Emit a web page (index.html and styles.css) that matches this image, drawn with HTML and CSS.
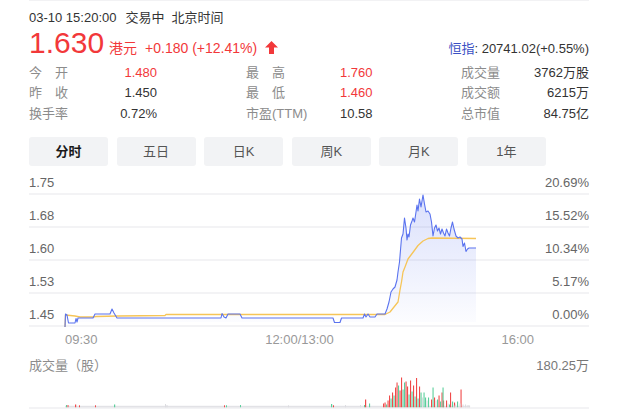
FILE: index.html
```html
<!DOCTYPE html>
<html lang="zh">
<head>
<meta charset="utf-8">
<title>Quote</title>
<link rel="stylesheet" href="styles.css">
</head>
<body>
<div class="page">
  <div class="header">03-10 15:20:00<span class="status">交易中</span><span class="tz">北京时间</span></div>

  <div class="price-row">
    <span class="price">1.630</span>
    <span class="currency">港元</span>
    <span class="change">+0.180 (+12.41%)</span>
    <svg class="arrow" width="13" height="13" viewBox="0 0 13 13"><path d="M6.5 0 L13 6.5 L9 6.5 L9 13 L4 13 L4 6.5 L0 6.5 Z" fill="#f2383a"/></svg>
    <span class="index"><span class="index-name">恒指</span>: 20741.02(+0.55%)</span>
  </div>

  <div class="stats">
    <div class="stat-group g1">
      <span class="lbl">今 开</span><span class="val up">1.480</span>
      <span class="lbl">昨 收</span><span class="val">1.450</span>
      <span class="lbl">换手率</span><span class="val">0.72%</span>
    </div>
    <div class="stat-group g2">
      <span class="lbl">最 高</span><span class="val up">1.760</span>
      <span class="lbl">最 低</span><span class="val up">1.460</span>
      <span class="lbl">市盈(TTM)</span><span class="val">10.58</span>
    </div>
    <div class="stat-group g3">
      <span class="lbl">成交量</span><span class="val">3762万股</span>
      <span class="lbl">成交额</span><span class="val">6215万</span>
      <span class="lbl">总市值</span><span class="val">84.75亿</span>
    </div>
  </div>

  <div class="tabs">
    <div class="tab active">分时</div>
    <div class="tab">五日</div>
    <div class="tab">日K</div>
    <div class="tab">周K</div>
    <div class="tab">月K</div>
    <div class="tab">1年</div>
  </div>

  <div class="chart">
    <div class="grid-row"><span>1.75</span><span>20.69%</span></div>
    <div class="grid-row"><span>1.68</span><span>15.52%</span></div>
    <div class="grid-row"><span>1.60</span><span>10.34%</span></div>
    <div class="grid-row"><span>1.53</span><span>5.17%</span></div>
    <div class="grid-row"><span>1.45</span><span>0.00%</span></div>
    <svg class="plot" width="560" height="161" viewBox="0 0 560 161">
      <defs>
        <linearGradient id="areaFill" gradientUnits="userSpaceOnUse" x1="0" y1="195" x2="0" y2="322">
          <stop offset="0" stop-color="#5a73ef" stop-opacity="0.22"/>
          <stop offset="1" stop-color="#5a73ef" stop-opacity="0.02"/>
        </linearGradient>
      </defs>
      <g transform="translate(-29,-166)">
        <path fill="url(#areaFill)" d="M65,322 L65.5,314 67,315 68.5,323 75,323 76,318.5 77,322 78,318 93,318 95,314 110,314 112,309 114,313 117,318 221,318 222,313.5 224,317 226,318 228,314 240,314 242,318 333,318 334.5,322 340,322 341.5,318 363,318 364.5,314 366,317 368,314 370,317 375,317 377,314 385,314 387,309 389,302 391,292 393,289 395,287 397,280 398,272 399.5,262 400.5,250 401.5,238 403,234 404.5,218 406,228 407,240 408,234 409,237 410.5,225 412,221 413,218 414.5,222 416,212 417,205 418,211 419.5,199 421,207 423,195 424.5,204 426,212 428,211 430,214 431.5,222 433,236 434.5,228 436,225 437.5,231 439,228 440.5,234 442,229 443.5,233 445,236 446.5,229 448,233 449.5,236 451,228 452.5,222 454,229 456,236 458,238 460,237 462,239 463,246.5 464.5,243 466,251.5 467.5,249 469,248 476,248 L476,322 Z"/>
        <polyline fill="none" stroke="#f6c558" stroke-width="1.3" stroke-linejoin="round" points="65,327 65.5,315 75,316 80,317 93,317 96,316.5 118,316 165,315.5 166,314.5 385,314.5 390,312 394,307 398,302 400,290 401.5,282 403,272 405,267 408,259 411,255 414,251 418,245.5 423,241 428,238.5 432,238 476,238.5"/>
        <polyline fill="none" stroke="#5a73ef" stroke-width="1.1" stroke-linejoin="round" points="65,327 65.5,314 67,315 68.5,323 75,323 76,318.5 77,322 78,318 93,318 95,314 110,314 112,309 114,313 117,318 221,318 222,313.5 224,317 226,318 228,314 240,314 242,318 333,318 334.5,322.5 340,322.5 341.5,318 363,318 364.5,314 366,317 368,314 370,317 375,317 377,314 385,314 387,309 389,302 391,292 393,289 395,287 397,280 398,272 399.5,262 400.5,250 401.5,238 403,234 404.5,218 406,228 407,240 408,234 409,237 410.5,225 412,221 413,218 414.5,222 416,212 417,205 418,211 419.5,199 421,207 423,195 424.5,204 426,212 428,211 430,214 431.5,222 433,236 434.5,228 436,225 437.5,231 439,228 440.5,234 442,229 443.5,233 445,236 446.5,229 448,233 449.5,236 451,228 452.5,222 454,229 456,236 458,238 460,237 462,239 463,246.5 464.5,243 466,251.5 467.5,249 469,248 476,248"/>
      </g>
    </svg>
  </div>

  <div class="time-axis"><span>09:30</span><span>12:00/13:00</span><span>16:00</span></div>

  <div class="vol-head"><span class="vol-title">成交量（股）</span><span class="vol-max">180.25万</span></div>

  <svg class="vol" width="560" height="34" viewBox="0 0 560 34">
    <g transform="translate(-29,-376.5)">
      <rect x="65" y="406.3" width="405" height="1.7" fill="#e2e2e6"/>
      <g fill="#f04a4a">
        <rect x="67.5" y="405.5" width="1" height="2.5"/>
        <rect x="75" y="405" width="1.2" height="3"/>
        <rect x="79" y="405.8" width="1" height="2.2"/>
        <rect x="95" y="405.8" width="1" height="2.2"/>
        <rect x="224" y="405.8" width="1" height="2.2"/>
        <rect x="333" y="405.8" width="1" height="2.2"/>
        <rect x="365" y="400" width="1.2" height="8"/>
        <rect x="383" y="404" width="1.1" height="4"/>
        <rect x="384.5" y="403" width="1.1" height="5"/>
        <rect x="387.5" y="401" width="1.1" height="7"/>
        <rect x="389" y="396" width="1.1" height="12"/>
        <rect x="392" y="393" width="1.1" height="15"/>
        <rect x="395" y="388" width="1.1" height="20"/>
        <rect x="396.5" y="383" width="1.1" height="25"/>
        <rect x="399.5" y="391" width="1.1" height="17"/>
        <rect x="401" y="378" width="1.1" height="30"/>
        <rect x="405.5" y="382" width="1.1" height="26"/>
        <rect x="407" y="387" width="1.1" height="21"/>
        <rect x="410" y="381" width="1.1" height="27"/>
        <rect x="413" y="386" width="1.1" height="22"/>
        <rect x="416" y="378.5" width="1.1" height="29.5"/>
        <rect x="419" y="387" width="1.1" height="21"/>
        <rect x="431" y="400" width="1.1" height="8"/>
        <rect x="434" y="398" width="1.1" height="10"/>
        <rect x="438.5" y="396" width="1.1" height="12"/>
        <rect x="441.5" y="393" width="1.1" height="15"/>
        <rect x="443" y="401" width="1.1" height="7"/>
        <rect x="446" y="401" width="1.1" height="7"/>
        <rect x="450" y="393" width="1.1" height="15"/>
        <rect x="454" y="403" width="1.1" height="5"/>
        <rect x="460.5" y="390" width="1.1" height="18"/>
      </g>
      <g fill="#5ccf9c">
        <rect x="66" y="405.5" width="1" height="2.5"/>
        <rect x="114" y="405" width="1.2" height="3"/>
        <rect x="226" y="405.8" width="1" height="2.2"/>
        <rect x="240" y="405.5" width="1" height="2.5"/>
        <rect x="331" y="404.5" width="1.2" height="3.5"/>
        <rect x="364" y="405.5" width="1" height="2.5"/>
        <rect x="369" y="404" width="1.1" height="4"/>
        <rect x="386" y="405" width="1.1" height="3"/>
        <rect x="390.5" y="399" width="1.1" height="9"/>
        <rect x="393.5" y="396" width="1.1" height="12"/>
        <rect x="398" y="386" width="1.1" height="22"/>
        <rect x="402.5" y="390" width="1.1" height="18"/>
        <rect x="404" y="383" width="1.1" height="25"/>
        <rect x="408.5" y="395" width="1.1" height="13"/>
        <rect x="411.5" y="392" width="1.1" height="16"/>
        <rect x="414.5" y="397" width="1.1" height="11"/>
        <rect x="417.5" y="399" width="1.1" height="9"/>
        <rect x="420.5" y="393" width="1.1" height="15"/>
        <rect x="423.5" y="393" width="1.1" height="15"/>
        <rect x="425" y="398" width="1.1" height="10"/>
        <rect x="428" y="398" width="1.1" height="10"/>
        <rect x="432.5" y="388" width="1.1" height="20"/>
        <rect x="437" y="400" width="1.1" height="8"/>
        <rect x="440" y="402" width="1.1" height="6"/>
        <rect x="442.5" y="388" width="1.1" height="20"/>
        <rect x="449" y="405" width="1.1" height="3"/>
        <rect x="452" y="402" width="1.1" height="6"/>
        <rect x="457" y="402" width="1.1" height="6"/>
      </g>
      <g fill="#dcdce0">
        <rect x="165" y="404.5" width="1" height="3.5"/>
        <rect x="166.5" y="405.5" width="1" height="2.5"/>
        <rect x="288" y="405.8" width="1" height="2.2"/>
        <rect x="345" y="405.5" width="1" height="2.5"/>
        <rect x="360" y="405.5" width="1" height="2.5"/>
        <rect x="422" y="398" width="1.1" height="10"/>
        <rect x="426.5" y="401" width="1.1" height="7"/>
        <rect x="435.5" y="401" width="1.1" height="7"/>
        <rect x="447.5" y="404" width="1.1" height="4"/>
        <rect x="453.5" y="406" width="1.1" height="2"/>
        <rect x="455" y="405" width="1.1" height="3"/>
        <rect x="459.5" y="404" width="1.1" height="4"/>
        <rect x="462.5" y="405" width="1.1" height="3"/>
        <rect x="465" y="405" width="1.1" height="3"/>
        <rect x="467.5" y="405.5" width="1.1" height="2.5"/>
        <rect x="469" y="406" width="1.1" height="2"/>
      </g>
      <rect x="29" y="408" width="560" height="1" fill="#e8e8ec"/>
    </g>
  </svg>
</div>
</body>
</html>
```

FILE: styles.css
```css
html, body {
  margin: 0;
  padding: 0;
  background: #ffffff;
}

body {
  font-family: "Liberation Sans", "Noto Sans CJK SC", sans-serif;
  font-size: 13px;
  color: #333333;
}

.page {
  width: 560px;
  margin-left: 29px;
  border-top: 1px solid #f2f2f4;
}

.header {
  padding-top: 6.5px;
  line-height: 20px;
  font-size: 13px;
  color: #333333;
  white-space: nowrap;
}

.status {
  margin-left: 9px;
}

.tz {
  margin-left: 7px;
}

.price-row {
  display: flex;
  align-items: baseline;
  height: 30px;
  line-height: 30px;
  color: #f2383a;
  white-space: nowrap;
}

.price {
  font-size: 30px;
}

.currency {
  margin-left: 5px;
  font-size: 14px;
}

.change {
  margin-left: 8px;
  font-size: 14px;
}

.arrow {
  margin-left: 8px;
  display: block;
  align-self: flex-end;
  margin-bottom: 4px;
}

.index {
  margin-left: auto;
  font-size: 13px;
  color: #333333;
}

.index-name {
  color: #3a50c4;
}

.stats {
  display: flex;
  margin-top: 5.2px;
  font-size: 13px;
  line-height: 20.5px;
}

.stat-group {
  display: grid;
}

.g1 {
  width: 217px;
  grid-template-columns: 39px 89px;
}

.g1 .val {
  text-align: right;
}

.g2 {
  width: 215px;
  grid-template-columns: 94px auto;
}

.g3 {
  flex: 1;
  grid-template-columns: 39px 1fr;
}

.g3 .val {
  text-align: right;
}

.lbl {
  color: #8c8c8c;
  white-space: nowrap;
}

.g1 .lbl,
.g2 .lbl:not(:last-of-type) {
  text-align: left;
}

.g1 .lbl {
  text-align-last: justify;
}

.g2 .lbl:nth-child(1),
.g2 .lbl:nth-child(3) {
  width: 39px;
  text-align-last: justify;
}

.val {
  color: #333333;
  white-space: nowrap;
}

.val.up {
  color: #f2383a;
}

.tabs {
  display: flex;
  gap: 8.6px;
  margin-top: 12.8px;
}

.tab {
  width: 79px;
  height: 29px;
  line-height: 29px;
  text-align: center;
  background: #f2f3f5;
  border-radius: 3px;
  font-size: 13px;
  color: #555555;
}

.tab.active {
  color: #1a1a1a;
  font-weight: 600;
}

.chart {
  position: relative;
}

.grid-row {
  box-sizing: border-box;
  height: 33px;
  border-bottom: 2px solid #f3f3f5;
  display: flex;
  justify-content: space-between;
  align-items: flex-end;
  padding-bottom: 2.5px;
  line-height: 14px;
  font-size: 13px;
  color: #666666;
}

.grid-row:first-child {
  height: 29px;
}

.plot {
  position: absolute;
  left: 0;
  top: 0;
  overflow: visible;
}

.time-axis {
  display: flex;
  justify-content: space-between;
  padding-top: 3.5px;
  padding-left: 36px;
  padding-right: 55px;
  line-height: 20px;
  font-size: 13px;
  color: #999999;
}

.vol-head {
  display: flex;
  justify-content: space-between;
  margin-top: 6px;
  line-height: 20px;
  font-size: 13px;
}

.vol-title {
  color: #8c8c8c;
}

.vol-max {
  color: #777777;
}

.vol {
  display: block;
  overflow: visible;
}
```
